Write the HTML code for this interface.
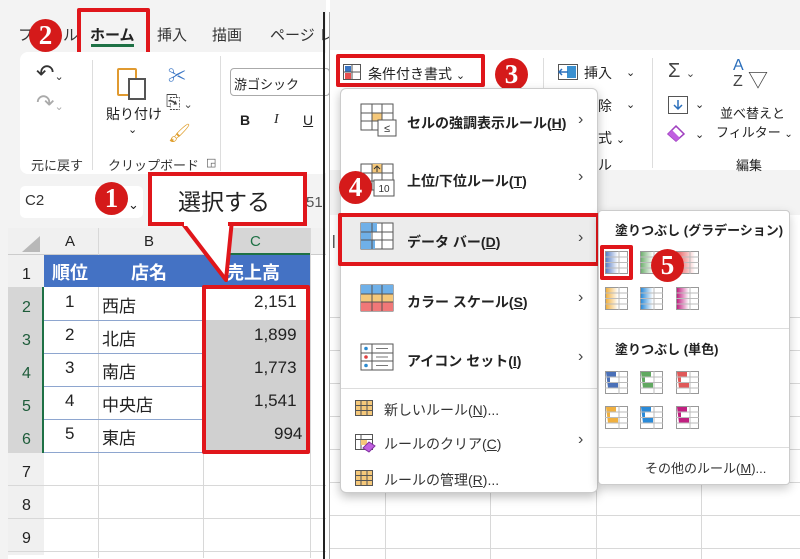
<!DOCTYPE html><html><head><meta charset="utf-8"><style>
*{margin:0;padding:0;box-sizing:border-box}
body{width:800px;height:559px;position:relative;overflow:hidden;background:#fff;font-family:"Liberation Sans","Noto Sans CJK JP",sans-serif;color:#222}
.a{position:absolute}
.t{position:absolute;white-space:nowrap}
.num{position:absolute;width:33px;height:33px;border-radius:50%;background:#d51a1a;color:#fff;font:bold 27px/33px "Liberation Serif",serif;text-align:center}
.red{position:absolute;border:4px solid #e0161b;border-radius:2px}
.gl{position:absolute;background:#d8d8d8}
.mi{position:absolute;font-size:14px;font-weight:bold;color:#222}
.ms{position:absolute;font-size:14px;color:#333}
.arr{position:absolute;font-size:16px;color:#444}
.cell{position:absolute;font-size:17px;color:#222}
</style></head><body>
<!-- LEFT PANE -->
<div class="a" style="left:0;top:0;width:326px;height:559px;background:#f3f3f3"></div>
<div class="t" style="left:18px;top:24px;font-size:15px;color:#333">ファイル</div>
<div class="t" style="left:90px;top:24px;font-size:15px;font-weight:bold">ホーム</div>
<div class="a" style="left:91px;top:44px;width:43px;height:3px;background:#1e7145"></div>
<div class="t" style="left:157px;top:24px;font-size:15px;color:#333">挿入</div>
<div class="t" style="left:212px;top:24px;font-size:15px;color:#333">描画</div>
<div class="t" style="left:270px;top:24px;font-size:15px;color:#333">ページ レ</div>
<div class="red" style="left:77px;top:8px;width:73px;height:50px"></div>
<div class="num" style="left:29px;top:19px">2</div>
<div class="a" style="left:20px;top:52px;width:310px;height:122px;background:#fff;border-radius:8px"></div>
<div class="t" style="left:36px;top:60px;font-size:22px;color:#333">↶<span style="font-size:11px">⌄</span></div>
<div class="t" style="left:36px;top:90px;font-size:22px;color:#aaa">↷<span style="font-size:11px">⌄</span></div>
<div class="t" style="left:31px;top:155px;font-size:13px;color:#333">元に戻す</div>
<div class="a" style="left:92px;top:60px;width:1px;height:110px;background:#ddd"></div>
<div class="a" style="left:117px;top:68px;width:20px;height:28px;border:2px solid #e09a30;border-radius:2px"></div>
<div class="a" style="left:128px;top:78px;width:18px;height:22px;border:2px solid #555;background:#fff"></div>
<div class="t" style="left:106px;top:104px;font-size:14px">貼り付け</div>
<div class="t" style="left:128px;top:123px;font-size:11px">⌄</div>
<div class="t" style="left:168px;top:62px;font-size:18px;color:#3a75c4">✂</div>
<div class="t" style="left:166px;top:92px;font-size:18px;color:#444">⎘<span style="font-size:11px"> ⌄</span></div>
<div class="t" style="left:168px;top:123px;font-size:18px;color:#e0a030">🖌</div>
<div class="t" style="left:108px;top:155px;font-size:13px;color:#333">クリップボード</div>
<div class="t" style="left:206px;top:156px;font-size:11px;color:#555">◲</div>
<div class="a" style="left:220px;top:56px;width:1px;height:115px;background:#ddd"></div>
<div class="a" style="left:230px;top:68px;width:100px;height:28px;border:1px solid #aaa;border-radius:4px;background:#fff"></div>
<div class="t" style="left:234px;top:74px;font-size:13px">游ゴシック</div>
<div class="t" style="left:240px;top:112px;font-size:14px;font-weight:bold">B</div>
<div class="t" style="left:274px;top:112px;font-size:14px;font-style:italic;font-family:'Liberation Serif',serif">I</div>
<div class="t" style="left:303px;top:112px;font-size:14px;text-decoration:underline">U</div>
<div class="a" style="left:20px;top:186px;width:123px;height:32px;background:#fff;border-radius:5px"></div>
<div class="t" style="left:25px;top:192px;font-size:15px;color:#333">C2</div>
<div class="t" style="left:128px;top:197px;font-size:13px">⌄</div>
<div class="t" style="left:306px;top:194px;font-size:15px;color:#555">51</div>
<div class="num" style="left:95px;top:182px">1</div>
<!-- grid -->
<div class="a" style="left:8px;top:228px;width:318px;height:331px;background:#fff"></div>
<div class="a" style="left:8px;top:228px;width:318px;height:27px;background:#f0f0f0;border-bottom:1px solid #ccc"></div>
<div class="a" style="left:203px;top:228px;width:107px;height:27px;background:#d6d6d6;border-bottom:2px solid #1e7145"></div>
<div class="a" style="left:8px;top:255px;width:36px;height:300px;background:#f0f0f0"></div>
<div class="a" style="left:8px;top:287px;width:36px;height:166px;background:#d6d6d6;border-right:2px solid #1e7145"></div>
<svg class="a" style="left:20px;top:234px" width="22" height="20"><polygon points="20,2 20,18 2,18" fill="#b8b8b8"/></svg>
<div class="t" style="left:65px;top:233px;font-size:15px">A</div>
<div class="t" style="left:144px;top:233px;font-size:15px">B</div>
<div class="t" style="left:250px;top:233px;font-size:15px;color:#1e7145">C</div>
<div class="gl" style="left:98px;top:228px;width:1px;height:330px"></div>
<div class="gl" style="left:203px;top:228px;width:1px;height:330px"></div>
<div class="gl" style="left:310px;top:228px;width:1px;height:330px"></div>
<div class="gl" style="left:44px;top:320px;width:266px;height:1px;background:#8ea6cf"></div>
<div class="gl" style="left:44px;top:353px;width:266px;height:1px;background:#8ea6cf"></div>
<div class="gl" style="left:44px;top:386px;width:266px;height:1px;background:#8ea6cf"></div>
<div class="gl" style="left:44px;top:419px;width:266px;height:1px;background:#8ea6cf"></div>
<div class="gl" style="left:44px;top:452px;width:266px;height:1px;background:#8ea6cf"></div>
<div class="gl" style="left:8px;top:485px;width:318px;height:1px"></div>
<div class="gl" style="left:8px;top:518px;width:318px;height:1px"></div>
<div class="gl" style="left:8px;top:551px;width:318px;height:1px"></div>
<div class="a" style="left:44px;top:255px;width:266px;height:32px;background:#4472c4"></div>
<div class="t" style="left:52px;top:259px;font-size:18px;font-weight:bold;color:#fff">順位</div>
<div class="t" style="left:131px;top:259px;font-size:18px;font-weight:bold;color:#fff">店名</div>
<div class="t" style="left:226px;top:259px;font-size:18px;font-weight:bold;color:#fff">売上高</div>
<div class="a" style="left:204px;top:320px;width:106px;height:132px;background:#d0d0d0"></div>
<div class="t" style="left:22px;top:266px;font-size:16px">1</div>
<div class="t" style="left:22px;top:299px;font-size:16px;color:#1e5c3a">2</div>
<div class="t" style="left:22px;top:332px;font-size:16px;color:#1e5c3a">3</div>
<div class="t" style="left:22px;top:365px;font-size:16px;color:#1e5c3a">4</div>
<div class="t" style="left:22px;top:398px;font-size:16px;color:#1e5c3a">5</div>
<div class="t" style="left:22px;top:431px;font-size:16px;color:#1e5c3a">6</div>
<div class="t" style="left:22px;top:464px;font-size:16px">7</div>
<div class="t" style="left:22px;top:497px;font-size:16px">8</div>
<div class="t" style="left:22px;top:530px;font-size:16px">9</div>
<div class="cell" style="left:65px;top:292px">1</div><div class="cell" style="left:102px;top:292px">西店</div><div class="cell" style="left:254px;top:292px">2,151</div>
<div class="cell" style="left:65px;top:325px">2</div><div class="cell" style="left:102px;top:325px">北店</div><div class="cell" style="left:254px;top:325px">1,899</div>
<div class="cell" style="left:65px;top:358px">3</div><div class="cell" style="left:102px;top:358px">南店</div><div class="cell" style="left:254px;top:358px">1,773</div>
<div class="cell" style="left:65px;top:391px">4</div><div class="cell" style="left:102px;top:391px">中央店</div><div class="cell" style="left:254px;top:391px">1,541</div>
<div class="cell" style="left:65px;top:424px">5</div><div class="cell" style="left:102px;top:424px">東店</div><div class="cell" style="left:274px;top:424px">994</div>
<div class="red" style="left:202px;top:285px;width:108px;height:169px"></div>
<!-- callout -->
<svg class="a" style="left:140px;top:170px" width="180" height="115"><polygon points="40,50 92,50 86,110" fill="#fff" stroke="#e0161b" stroke-width="4" stroke-linejoin="round"/><rect x="10" y="4" width="155" height="50" fill="#fff" stroke="#e0161b" stroke-width="4"/><rect x="44" y="48" width="44" height="8" fill="#fff"/></svg>
<div class="t" style="left:178px;top:183px;font-size:23px">選択する</div>
<!-- divider -->
<div class="a" style="left:323px;top:12px;width:2px;height:547px;background:#222"></div>
<div class="a" style="left:329px;top:12px;width:1px;height:547px;background:#aaa"></div>
<!-- RIGHT PANE -->
<div class="a" style="left:330px;top:0;width:470px;height:559px;background:#fff"></div>
<div class="a" style="left:330px;top:0;width:470px;height:50px;background:#f3f3f3"></div>
<div class="a" style="left:330px;top:170px;width:470px;height:45px;background:#f3f3f3"></div>
<div class="gl" style="left:330px;top:317px;width:470px;height:1px"></div>
<div class="gl" style="left:330px;top:350px;width:470px;height:1px"></div>
<div class="gl" style="left:330px;top:383px;width:470px;height:1px"></div>
<div class="gl" style="left:330px;top:416px;width:470px;height:1px"></div>
<div class="gl" style="left:330px;top:449px;width:470px;height:1px"></div>
<div class="gl" style="left:330px;top:482px;width:470px;height:1px"></div>
<div class="gl" style="left:330px;top:515px;width:470px;height:1px"></div>
<div class="gl" style="left:330px;top:548px;width:470px;height:1px"></div>
<div class="gl" style="left:385px;top:215px;width:1px;height:344px"></div>
<div class="gl" style="left:490px;top:215px;width:1px;height:344px"></div>
<div class="gl" style="left:596px;top:215px;width:1px;height:344px"></div>
<div class="gl" style="left:701px;top:215px;width:1px;height:344px"></div>
<div class="t" style="left:332px;top:232px;font-size:14px">|</div>
<!-- ribbon right -->
<svg class="a" style="left:343px;top:64px" width="18" height="16"><rect x="0.5" y="0.5" width="17" height="15" fill="#fff" stroke="#555"/><rect x="2" y="2" width="6" height="6" fill="#3a75c4"/><rect x="2" y="9" width="6" height="6" fill="#e85050"/><line x1="0" y1="8" x2="18" y2="8" stroke="#555"/><line x1="9" y1="0" x2="9" y2="16" stroke="#555"/></svg>
<div class="t" style="left:368px;top:64px;font-size:14px">条件付き書式 <span style="font-size:11px">⌄</span></div>
<div class="red" style="left:336px;top:54px;width:149px;height:33px"></div>
<div class="num" style="left:495px;top:58px">3</div>
<div class="a" style="left:543px;top:58px;width:1px;height:105px;background:#ddd"></div>
<svg class="a" style="left:558px;top:64px" width="20" height="16"><rect x="0.5" y="0.5" width="19" height="15" fill="#fff" stroke="#555"/><rect x="9" y="2" width="9" height="12" fill="#3a90d0"/><path d="M2 8h8M4 5l-3 3 3 3" stroke="#2a6ebb" fill="none" stroke-width="1.5"/></svg>
<div class="t" style="left:584px;top:63px;font-size:14px">挿入</div>
<div class="t" style="left:626px;top:66px;font-size:11px">⌄</div>
<div class="t" style="left:598px;top:96px;font-size:14px">除</div>
<div class="t" style="left:626px;top:98px;font-size:11px">⌄</div>
<div class="t" style="left:598px;top:128px;font-size:14px">式 <span style="font-size:11px">⌄</span></div>
<div class="t" style="left:598px;top:155px;font-size:14px">ル</div>
<div class="a" style="left:652px;top:58px;width:1px;height:110px;background:#ddd"></div>
<div class="t" style="left:668px;top:60px;font-size:20px;color:#444">Σ <span style="font-size:11px">⌄</span></div>
<svg class="a" style="left:668px;top:96px" width="20" height="18"><rect x="0.5" y="0.5" width="19" height="17" fill="#fff" stroke="#555"/><path d="M10 4v9M6 9l4 4 4-4" stroke="#2a6ebb" fill="none" stroke-width="1.5"/></svg>
<div class="t" style="left:695px;top:98px;font-size:11px">⌄</div>
<svg class="a" style="left:666px;top:124px" width="22" height="18"><polygon points="2,10 10,2 18,10 10,17" fill="#fff" stroke="#a040c0" stroke-width="1.5"/><polygon points="2,10 6,6 14,14 10,17" fill="#c060e0"/></svg>
<div class="t" style="left:695px;top:128px;font-size:11px">⌄</div>
<div class="t" style="left:733px;top:58px;font-size:16px;color:#2a6ebb;line-height:16px">A<br><span style="color:#444">Z</span></div>
<div class="t" style="left:748px;top:64px;font-size:20px;color:#444">▽</div>
<div class="t" style="left:720px;top:103px;font-size:13px">並べ替えと</div>
<div class="t" style="left:716px;top:122px;font-size:13px">フィルター <span style="font-size:10px">⌄</span></div>
<div class="t" style="left:736px;top:155px;font-size:13px">編集</div>
<!-- dropdown -->
<div class="a" style="left:340px;top:88px;width:258px;height:405px;background:#fff;border:1px solid #ccc;border-radius:6px;box-shadow:0 4px 10px rgba(0,0,0,.25)"></div>
<svg class="a" style="left:360px;top:103px" width="40" height="36"><rect x="1" y="1" width="32" height="26" fill="#fff" stroke="#555"/><rect x="12" y="10" width="10" height="8" fill="#f5c87a"/><path d="M1 10h32M1 18h32M12 1v26M22 1v26" stroke="#555"/><rect x="18" y="17" width="18" height="16" fill="#fff" stroke="#555"/><text x="27" y="29" font-size="11" text-anchor="middle" fill="#333">≤</text></svg>
<div class="mi" style="left:407px;top:113px">セルの強調表示ルール(<u>H</u>)</div>
<div class="arr" style="left:578px;top:111px">›</div>
<svg class="a" style="left:360px;top:163px" width="40" height="36"><rect x="1" y="1" width="32" height="26" fill="#fff" stroke="#555"/><rect x="12" y="1" width="10" height="9" fill="#f5c87a"/><path d="M1 10h32M1 18h32M12 1v26M22 1v26" stroke="#555"/><path d="M17 9V3M14 6l3-3 3 3" stroke="#333" fill="none"/><rect x="14" y="17" width="20" height="16" fill="#fff" stroke="#555"/><text x="24" y="29" font-size="10" text-anchor="middle" fill="#333">10</text></svg>
<div class="mi" style="left:407px;top:171px">上位/下位ルール(<u>T</u>)</div>
<div class="arr" style="left:578px;top:168px">›</div>
<div class="a" style="left:342px;top:216px;width:254px;height:48px;background:#ececec"></div>
<svg class="a" style="left:360px;top:222px" width="36" height="30"><rect x="1" y="1" width="32" height="26" fill="#fff" stroke="#555"/><rect x="1" y="1" width="16" height="9" fill="#6fb0e8"/><rect x="1" y="10" width="10" height="8" fill="#6fb0e8"/><rect x="1" y="18" width="14" height="9" fill="#6fb0e8"/><path d="M1 10h32M1 18h32M12 1v26M22 1v26" stroke="#555"/></svg>
<div class="mi" style="left:407px;top:232px">データ バー(<u>D</u>)</div>
<div class="arr" style="left:578px;top:229px">›</div>
<div class="red" style="left:338px;top:213px;width:262px;height:53px"></div>
<div class="num" style="left:339px;top:171px">4</div>
<svg class="a" style="left:360px;top:284px" width="36" height="30"><rect x="1" y="1" width="32" height="26" fill="#fff" stroke="#555"/><rect x="1" y="1" width="32" height="9" fill="#6fb0e8"/><rect x="1" y="10" width="32" height="8" fill="#f5c87a"/><rect x="1" y="18" width="32" height="9" fill="#f07878"/><path d="M1 10h32M1 18h32M12 1v26M22 1v26" stroke="#555"/></svg>
<div class="mi" style="left:407px;top:292px">カラー スケール(<u>S</u>)</div>
<div class="arr" style="left:578px;top:289px">›</div>
<svg class="a" style="left:360px;top:343px" width="36" height="30"><rect x="1" y="1" width="32" height="26" fill="#fff" stroke="#555"/><path d="M1 10h32M1 18h32M12 1v26" stroke="#555"/><circle cx="6" cy="5.5" r="1.8" fill="#2a8ad0"/><circle cx="6" cy="14" r="1.8" fill="#e04040"/><circle cx="6" cy="22.5" r="1.8" fill="#2a8ad0"/><path d="M16 5.5h12M16 14h12M16 22.5h12" stroke="#777"/></svg>
<div class="mi" style="left:407px;top:351px">アイコン セット(<u>I</u>)</div>
<div class="arr" style="left:578px;top:348px">›</div>
<div class="a" style="left:341px;top:388px;width:256px;height:1px;background:#ddd"></div>
<svg class="a" style="left:355px;top:400px" width="20" height="18"><rect x="0.5" y="0.5" width="17" height="15" fill="#f5c87a" stroke="#555"/><path d="M0 5.5h18M0 10.5h18M6 0v16M12 0v16" stroke="#555"/></svg>
<div class="ms" style="left:384px;top:400px">新しいルール(<u>N</u>)...</div>
<svg class="a" style="left:355px;top:434px" width="22" height="20"><rect x="0.5" y="0.5" width="17" height="15" fill="#fff" stroke="#555"/><path d="M0 5.5h18M6 0v16" stroke="#555"/><rect x="6" y="6" width="6" height="5" fill="#f5c87a"/><polygon points="8,14 14,8 20,12 14,18" fill="#c060e0" stroke="#8030a0"/></svg>
<div class="ms" style="left:384px;top:434px">ルールのクリア(<u>C</u>)</div>
<div class="arr" style="left:578px;top:431px">›</div>
<svg class="a" style="left:355px;top:470px" width="20" height="18"><rect x="0.5" y="0.5" width="17" height="15" fill="#f5c87a" stroke="#555"/><path d="M0 5.5h18M0 10.5h18M6 0v16M12 0v16" stroke="#555"/></svg>
<div class="ms" style="left:384px;top:470px">ルールの管理(<u>R</u>)...</div>
<!-- submenu -->
<div class="a" style="left:598px;top:210px;width:192px;height:275px;background:#fff;border:1px solid #ccc;border-radius:4px;box-shadow:0 4px 10px rgba(0,0,0,.2)"></div>
<div class="t" style="left:615px;top:220px;font-size:13px;font-weight:bold">塗りつぶし (グラデーション)</div>
<svg class="a" style="left:600px;top:248px" width="110" height="120">
<defs>
<linearGradient id="g1"><stop offset="0" stop-color="#5a80c8"/><stop offset="1" stop-color="#fff"/></linearGradient>
<linearGradient id="g2"><stop offset="0" stop-color="#70b070"/><stop offset="1" stop-color="#fff"/></linearGradient>
<linearGradient id="g3"><stop offset="0" stop-color="#e86060"/><stop offset="1" stop-color="#fff"/></linearGradient>
<linearGradient id="g4"><stop offset="0" stop-color="#f0b040"/><stop offset="1" stop-color="#fff"/></linearGradient>
<linearGradient id="g5"><stop offset="0" stop-color="#2a8ad8"/><stop offset="1" stop-color="#fff"/></linearGradient>
<linearGradient id="g6"><stop offset="0" stop-color="#c02080"/><stop offset="1" stop-color="#fff"/></linearGradient>
<g id="ic"><rect x="0.5" y="0.5" width="22" height="22" fill="none" stroke="#999"/><path d="M0 6h23M0 11.5h23M0 17h23M14 0v23" stroke="#bbb"/></g>
</defs>
<g transform="translate(5,3)"><rect x="1" y="1" width="12" height="21" fill="url(#g1)"/><use href="#ic"/></g>
<g transform="translate(40,3)"><rect x="1" y="1" width="12" height="21" fill="url(#g2)"/><use href="#ic"/></g>
<g transform="translate(76,3)"><rect x="1" y="1" width="18" height="21" fill="url(#g3)"/><use href="#ic"/></g>
<g transform="translate(5,39)"><rect x="1" y="1" width="12" height="21" fill="url(#g4)"/><use href="#ic"/></g>
<g transform="translate(40,39)"><rect x="1" y="1" width="12" height="21" fill="url(#g5)"/><use href="#ic"/></g>
<g transform="translate(76,39)"><rect x="1" y="1" width="12" height="21" fill="url(#g6)"/><use href="#ic"/></g>
</svg>
<div class="red" style="left:600px;top:245px;width:33px;height:35px"></div>
<div class="num" style="left:651px;top:249px">5</div>
<div class="a" style="left:599px;top:328px;width:190px;height:1px;background:#ddd"></div>
<div class="t" style="left:615px;top:339px;font-size:13px;font-weight:bold">塗りつぶし (単色)</div>
<svg class="a" style="left:600px;top:368px" width="110" height="70">
<g transform="translate(5,3)"><path d="M1 1h10v5h-6v6h8v5h-10z" fill="#4a70b8"/><use href="#ic"/></g>
<g transform="translate(40,3)"><path d="M1 1h10v5h-6v6h8v5h-10z" fill="#60a860"/><use href="#ic"/></g>
<g transform="translate(76,3)"><path d="M1 1h10v5h-6v6h8v5h-10z" fill="#e05858"/><use href="#ic"/></g>
<g transform="translate(5,38)"><path d="M1 1h10v5h-6v6h8v5h-10z" fill="#f0b040"/><use href="#ic"/></g>
<g transform="translate(40,38)"><path d="M1 1h10v5h-6v6h8v5h-10z" fill="#2a8ad8"/><use href="#ic"/></g>
<g transform="translate(76,38)"><path d="M1 1h10v5h-6v6h8v5h-10z" fill="#c02080"/><use href="#ic"/></g>
</svg>
<div class="a" style="left:599px;top:447px;width:190px;height:1px;background:#ddd"></div>
<div class="t" style="left:645px;top:458px;font-size:13px;color:#333">その他のルール(<u>M</u>)...</div>
</body></html>
